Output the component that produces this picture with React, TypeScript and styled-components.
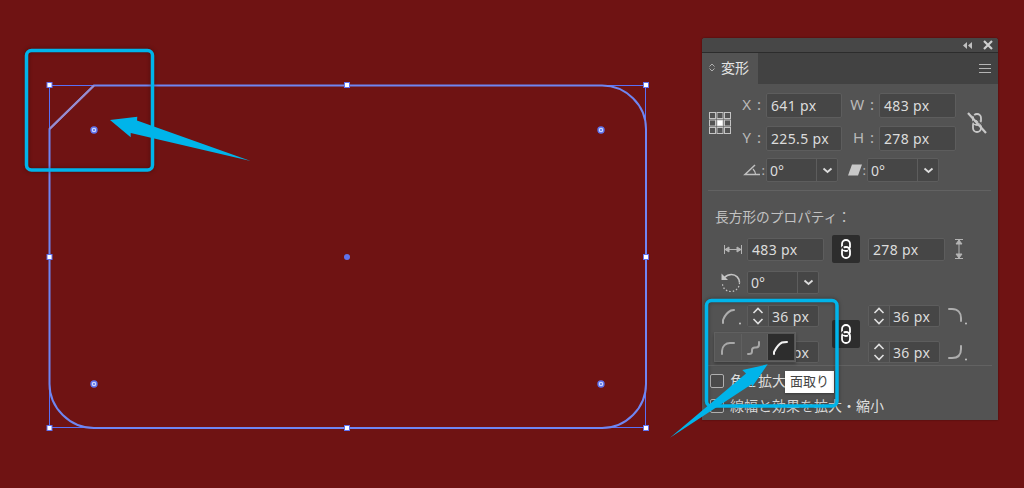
import React from 'react'
import styled, { createGlobalStyle } from 'styled-components'

const GlobalStyle = createGlobalStyle`
  html, body {
    margin: 0;
    padding: 0;
    background: #6f1313;
  }
`

const Page = styled.div`
  position: relative;
  display: flex;
  align-items: flex-start;
  width: 1024px;
  height: 488px;
  overflow: hidden;
  background: #6f1313;
  font-family: "Noto Sans", "Noto Sans CJK JP", sans-serif;
`

const Artboard = styled.svg`
  display: block;
  flex: 0 0 702px;
  width: 702px;
  height: 488px;
`

const Annotations = styled.svg`
  position: absolute;
  left: 0;
  top: 0;
  width: 1024px;
  height: 488px;
  pointer-events: none;
`

const Panel = styled.section`
  position: relative;
  flex: 0 0 296px;
  width: 296px;
  height: 382px;
  margin-top: 38px;
  background: #535353;
  border-radius: 3px 3px 0 0;
  box-shadow: 0 0 2px rgba(0, 0, 0, 0.45);
  color: #d9d9d9;
`

const TitleBar = styled.div`
  display: flex;
  align-items: center;
  justify-content: flex-end;
  gap: 11px;
  height: 14px;
  padding: 0 5px;
  background: #474747;
  border-bottom: 1px solid #2c2c2c;
  border-radius: 3px 3px 0 0;
`

const TabBar = styled.div`
  display: flex;
  align-items: stretch;
  justify-content: space-between;
  height: 31px;
  padding-right: 7px;
  background: #424242;
`

const Tab = styled.div`
  display: flex;
  align-items: center;
  gap: 6px;
  width: 56px;
  padding: 0 0 3px 7px;
  box-sizing: border-box;
  background: #535353;
  font-size: 14px;
  color: #e4e4e4;
`

const MenuLines = styled.div`
  align-self: center;
  width: 12px;
  height: 9px;
  border-top: 1px solid #b4b4b4;
  border-bottom: 1px solid #b4b4b4;
  box-sizing: border-box;
  background: linear-gradient(#b4b4b4, #b4b4b4) center / 100% 1px no-repeat;
`

const PositionGrid = styled.div`
  display: grid;
  grid-template-columns: 39px 25px 76px 37px 77px 1fr;
  grid-template-rows: 25px 25px;
  row-gap: 8px;
  padding-top: 9px;
`

const GridIcon = styled.div<{ $column: number }>`
  grid-column: ${({ $column }) => $column};
  grid-row: 1 / 3;
  display: flex;
  align-items: center;
  justify-content: ${({ $column }) => ($column === 1 ? 'flex-end' : 'center')};
  padding-right: ${({ $column }) => ($column === 1 ? '10px' : '0')};
  padding-top: 2px;
`

const AxisLabel = styled.label<{ $column?: number }>`
  grid-column: ${({ $column }) => $column ?? 'auto'};
  display: flex;
  align-items: center;
  justify-content: flex-end;
  padding-right: 5px;
  padding-bottom: 4px;
  font-size: 15px;
  word-spacing: 2px;
  color: #b9b9b9;
  white-space: pre;
`

const Field = styled.div<{ $width?: number }>`
  display: flex;
  align-items: center;
  box-sizing: border-box;
  width: ${({ $width }) => ($width ? `${$width}px` : '100%')};
  height: 100%;
  padding-left: 4px;
  background: #464646;
  border: 1px solid #5d5d5d;
  border-radius: 2px;
  font-size: 14px;
  letter-spacing: 0.35px;
  color: #dcdcdc;
  white-space: nowrap;
  overflow: hidden;
`

const AngleRow = styled.div`
  display: flex;
  align-items: center;
  height: 24px;
  margin: 7px 0 8px;
  padding-left: 40px;
`

const AngleLabel = styled.div<{ $width: number }>`
  display: flex;
  align-items: center;
  justify-content: flex-end;
  width: ${({ $width }) => $width}px;
  gap: 1px;
  padding-right: 1px;
  box-sizing: border-box;
  font-size: 13px;
  color: #b9b9b9;
`

const ComboBox = styled.div<{ $width: number }>`
  display: flex;
  flex: 0 0 auto;
  box-sizing: border-box;
  width: ${({ $width }) => $width}px;
  height: 24px;
  background: #464646;
  border: 1px solid #5d5d5d;
  border-radius: 2px;
  font-size: 14px;
  color: #dcdcdc;
`

const ComboValue = styled.div`
  flex: 1;
  display: flex;
  align-items: center;
  padding-left: 3px;
`

const ComboArrow = styled.div`
  flex: 0 0 20px;
  display: flex;
  align-items: center;
  justify-content: center;
  border-left: 1px solid #5d5d5d;
`

const Divider = styled.hr`
  height: 1px;
  margin: 0 7px 0 6px;
  border: 0;
  background: #626262;
`

const SectionTitle = styled.h3`
  margin: 16px 0 0 13px;
  font-size: 13.7px;
  line-height: 20px;
  font-weight: 400;
  color: #c2c2c2;
`

const SizeRow = styled.div`
  display: flex;
  align-items: center;
  height: 28px;
  margin-top: 8px;
`

const RowIcon = styled.div<{ $trailing?: boolean }>`
  display: flex;
  align-items: center;
  justify-content: flex-end;
  flex: 0 0 ${({ $trailing }) => ($trailing ? '24px' : '45px')};
  padding-right: 5px;
  box-sizing: border-box;
`

const SizeField = styled(Field)`
  flex: 0 0 auto;
  height: 23px;
`

const ChainButton = styled.div`
  display: flex;
  align-items: center;
  justify-content: center;
  flex: 0 0 28px;
  height: 28px;
  margin: 0 8px;
  background: #2d2d2d;
  border-radius: 2px;
`

const RotateRow = styled.div`
  display: flex;
  align-items: center;
  height: 23px;
  margin-top: 8px;

  ${ComboBox} {
    height: 23px;
  }
`

const CornerGrid = styled.div`
  display: grid;
  grid-template-columns: 45px 72px 13px 28px 8px 72px 1fr;
  grid-template-rows: 22px 22px;
  row-gap: 14px;
  height: 58px;
  margin-top: 11px;
  overflow: hidden;
`

const Stepper = styled.div<{ $column: number }>`
  grid-column: ${({ $column }) => $column};
  display: flex;
  box-sizing: border-box;
  height: 22px;
  background: #464646;
  border: 1px solid #5d5d5d;
  border-radius: 2px;
  font-size: 14px;
  letter-spacing: 0.35px;
  color: #dcdcdc;
  white-space: nowrap;
`

const StepperArrows = styled.div`
  flex: 0 0 20px;
  display: flex;
  align-items: center;
  justify-content: center;
  background: #4e4e4e;
  border-right: 1px solid #5d5d5d;
`

const StepperValue = styled.div`
  display: flex;
  align-items: center;
  padding-left: 3px;
`

const CornerIcon = styled.div<{ $side: 'left' | 'right' }>`
  display: flex;
  align-items: center;
  justify-content: ${({ $side }) => ($side === 'left' ? 'flex-end' : 'flex-start')};
  padding: ${({ $side }) => ($side === 'left' ? '0 4px 0 0' : '0 0 0 6px')};
`

const CornerChain = styled.div`
  grid-column: 4;
  grid-row: 1 / 3;
  align-self: center;
  display: flex;
  align-items: center;
  justify-content: center;
  height: 28px;
  background: #2d2d2d;
  border-radius: 2px;
`

const SectionDivider = styled(Divider)`
  margin: 2px 6px 0 6px;
`

const OptionRow = styled.div<{ $top: number }>`
  display: flex;
  align-items: center;
  gap: 6px;
  height: 18px;
  margin-top: ${({ $top }) => $top}px;
  padding-left: 8px;
  font-size: 14px;
  color: #dedede;
`

const OptionText = styled.span`
  margin-bottom: 3px;
`

const CheckBox = styled.span`
  display: block;
  box-sizing: border-box;
  width: 14px;
  height: 14px;
  border: 1px solid #b0b0b0;
  border-radius: 2px;
  background: #4a4a4a;
`

const ShapePopup = styled.div`
  position: absolute;
  left: 12px;
  top: 294px;
  display: flex;
  box-sizing: border-box;
  width: 82px;
  height: 30px;
  padding: 1px;
  background: #565656;
  border: 1px solid #606060;
  box-shadow: 0 2px 3px rgba(0, 0, 0, 0.3);
`

const ShapeOption = styled.div<{ $active?: boolean }>`
  flex: 1;
  display: flex;
  align-items: center;
  justify-content: center;
  background: ${({ $active }) => ($active ? '#2d2d2d' : 'transparent')};
  border-right: 1px solid ${({ $active }) => ($active ? '#2d2d2d' : '#606060')};
`

const Tooltip = styled.div`
  position: absolute;
  left: 83px;
  top: 333px;
  box-sizing: border-box;
  width: 49px;
  height: 22px;
  padding-bottom: 3px;
  display: flex;
  align-items: center;
  justify-content: center;
  background: #ffffff;
  box-shadow: 0 1px 2px rgba(0, 0, 0, 0.3);
  font-size: 13px;
  color: #444444;
`

const handles: [number, number][] = [
  [49.5, 85],
  [347, 85],
  [646, 85],
  [49.5, 257],
  [646, 257],
  [49.5, 428],
  [347, 428],
  [646, 428],
]

const widgets: [number, number][] = [
  [94, 130],
  [601, 130],
  [94, 384],
  [601, 384],
]

const ReferencePoint = () => (
  <svg width="22" height="22" viewBox="0 0 22 22" fill="none" stroke="#c4c4c4" strokeWidth="1">
    {[0.5, 8, 15.5].flatMap(y =>
      [0.5, 8, 15.5].map(x => (
        <rect
          key={`${x}-${y}`}
          x={x}
          y={y}
          width="6"
          height="6"
          fill={x === 8 && y === 8 ? '#ffffff' : 'none'}
        />
      )),
    )}
  </svg>
)

// two links; the short strokes in the button colour make them look interlocked
const ChainIcon = ({ broken }: { broken?: boolean }) => {
  const back = broken ? '#535353' : '#2d2d2d'
  return (
    <svg width="20" height="22" viewBox="0 0 20 22" fill="none" stroke={broken ? '#c8c8c8' : '#ffffff'} strokeWidth="1.800">
      <rect x="6" y="2" width="8" height="11" rx="4" />
      <path d="M4.500 11.500 7.500 9" stroke={back} strokeWidth="2" />
      <path d="M12.500 13 15.500 10.500" stroke={back} strokeWidth="2" />
      <rect x="6" y="9" width="8" height="11" rx="4" />
      <path d="M6 8.500 8 11.500" stroke={back} strokeWidth="1.500" />
      {broken && <path d="M1 1 19 21" strokeWidth="2.200" />}
      {broken && <path d="M3.500 0 20 18.500" stroke={back} strokeWidth="1.400" />}
    </svg>
  )
}

const Chevron = () => (
  <svg width="11" height="7" viewBox="0 0 11 7" fill="none" stroke="#dddddd" strokeWidth="1.800">
    <path d="M1.500 1.500 5.500 5 9.500 1.500" />
  </svg>
)

const StepArrows = () => (
  <svg width="12" height="20" viewBox="0 0 12 20" fill="none" stroke="#e0e0e0" strokeWidth="1.600">
    <path d="M1.500 7 6 2.500 10.500 7M1.500 13 6 17.500 10.500 13" />
  </svg>
)

const AngleIcon = () => (
  <svg width="18" height="12" viewBox="0 0 18 12" fill="none" stroke="#c0c0c0" strokeWidth="1.500">
    <path d="M12 1 2 10.500h15" />
    <path d="M10 5c1.400 1.500 2.500 3 2.500 5" strokeWidth="1.200" />
  </svg>
)

const ShearIcon = () => (
  <svg width="14" height="12" viewBox="0 0 14 12" fill="#c8c8c8">
    <path d="M4 .5h10L10 11.500H0z" />
  </svg>
)

const WidthIcon = () => (
  <svg width="18" height="9" viewBox="0 0 18 9" fill="none" stroke="#b4b4b4" strokeWidth="1">
    <path d="M.5 0v9M17.500 0v9M1 4.500h16" />
    <path d="M1 4.500 5 2v5zM17 4.500 13 2v5z" fill="#b4b4b4" />
  </svg>
)

const HeightIcon = () => (
  <svg width="10" height="20" viewBox="0 0 10 20" fill="none" stroke="#b4b4b4" strokeWidth="1">
    <path d="M1 .5h8M1 19.500h8M5 1v18" />
    <path d="M5 1 2 5h6zM5 19 2 15h6z" fill="#b4b4b4" />
  </svg>
)

const RotateIcon = () => (
  <svg width="22" height="22" viewBox="0 0 22 22" fill="none" stroke="#c4c4c4" strokeWidth="1.600">
    <path d="M4.500 5.500C6.500 3.500 9 2.500 11.500 2.500c4.500 0 8 3.500 8 8" />
    <path d="M1.500 1.500v6.500h6.500z" fill="#c4c4c4" stroke="none" />
    <path d="M19.500 10.500c0 5-3.500 9-8.500 9s-8-3-8.500-7.500" strokeWidth="1.200" strokeDasharray="1.500 2" />
  </svg>
)

type CornerKind = 'round' | 'inverted' | 'chamfer'

const cornerPaths: Record<CornerKind, string> = {
  round: 'M3 16v-3c0-5 4-8 8-8h4',
  inverted: 'M3 16h1c2 0 3-1 3-2.500V12c0-1.500 1-2.500 3-2.500h1c2 0 3-1 3-3V4',
  chamfer: 'M3 16v-2c1.500-3 5-8 8-9.500 1-.5 2-.5 5-.5',
}

const CornerShape = ({ kind, color }: { kind: CornerKind; color: string }) => (
  <svg width="19" height="19" viewBox="0 0 19 19" fill="none" stroke={color} strokeWidth="2" strokeLinecap="round">
    <path d={cornerPaths[kind]} />
  </svg>
)

const cornerGlyphs = {
  tl: 'M3 17v-3c1.500-4 5-8 8-9.500 1-.5 2-.5 3-.5',
  tr: 'M3 3h3c6 0 9 4 9 9v3',
  br: 'M3 16h3c6 0 9-3 9-9V4',
}

const CornerGlyph = ({ corner }: { corner: keyof typeof cornerGlyphs }) => (
  <svg width="23" height="20" viewBox="0 0 23 20" fill="none" stroke="#aeaeae" strokeWidth="2" strokeLinecap="round">
    <path d={cornerGlyphs[corner]} />
    <circle cx="20" cy="17.500" r="0.900" fill="#d0d0d0" stroke="none" />
  </svg>
)

const CornerField = ({ column }: { column: number }) => (
  <Stepper $column={column}>
    <StepperArrows>
      <StepArrows />
    </StepperArrows>
    <StepperValue>36 px</StepperValue>
  </Stepper>
)

const AngleCombo = () => (
  <ComboBox $width={72}>
    <ComboValue>0°</ComboValue>
    <ComboArrow>
      <Chevron />
    </ComboArrow>
  </ComboBox>
)

const App: React.FC = () => (
  <Page>
    <GlobalStyle />
    <Artboard viewBox="0 0 702 488">
      <rect x="49.500" y="85.500" width="596" height="342" fill="none" stroke="#5a70f5" strokeWidth="1" />
      <path
        d="M49.500 129 94 85.500H602C626 85.500 646 105 646 129V384C646 408 626 428 602 428H94C70 428 49.500 408 49.500 384Z"
        fill="none"
        stroke="#6f86f2"
        strokeWidth="2"
      />
      <path d="M49.500 129 94 85.500" fill="none" stroke="#9a8ccc" strokeWidth="2" />
      {handles.map(([x, y]) => (
        <rect key={`${x}-${y}`} x={x - 2.500} y={y - 2.500} width="5" height="5" fill="#ffffff" stroke="#6173f0" strokeWidth="1" />
      ))}
      {widgets.map(([x, y]) => (
        <g key={`${x}-${y}`}>
          <circle cx={x} cy={y} r="3" fill="#ccd6ff" stroke="#5f73ee" strokeWidth="1.400" />
          <circle cx={x} cy={y} r="0.900" fill="#4a5fe0" />
        </g>
      ))}
      <circle cx="347" cy="257" r="3" fill="#5f73ee" />
    </Artboard>

    <Panel>
      <TitleBar>
        <svg width="9" height="7" viewBox="0 0 9 7" fill="#c0c0c0">
          <path d="M4 0v7L0 3.500zM9 0v7L5 3.500z" />
        </svg>
        <svg width="10" height="10" viewBox="0 0 10 10" stroke="#cfcfcf" strokeWidth="2.200">
          <path d="M1 1l8 8M9 1l-8 8" />
        </svg>
      </TitleBar>
      <TabBar>
        <Tab>
          <svg width="6" height="9" viewBox="0 0 6 9" fill="none" stroke="#b0b0b0" strokeWidth="1">
            <path d="M.5 3.500 3 1l2.500 2.500M.5 5.500 3 8l2.500-2.500" />
          </svg>
          変形
        </Tab>
        <MenuLines />
      </TabBar>

      <PositionGrid>
        <GridIcon $column={1}>
          <ReferencePoint />
        </GridIcon>
        <AxisLabel $column={2}>X :</AxisLabel>
        <Field>641 px</Field>
        <AxisLabel>W :</AxisLabel>
        <Field>483 px</Field>
        <GridIcon $column={6}>
          <ChainIcon broken />
        </GridIcon>
        <AxisLabel $column={2}>Y :</AxisLabel>
        <Field>225.5 px</Field>
        <AxisLabel>H :</AxisLabel>
        <Field>278 px</Field>
      </PositionGrid>

      <AngleRow>
        <AngleLabel $width={24}>
          <AngleIcon />:
        </AngleLabel>
        <AngleCombo />
        <AngleLabel $width={29}>
          <ShearIcon />:
        </AngleLabel>
        <AngleCombo />
      </AngleRow>

      <Divider />
      <SectionTitle>長方形のプロパティ：</SectionTitle>

      <SizeRow>
        <RowIcon>
          <WidthIcon />
        </RowIcon>
        <SizeField $width={77}>483 px</SizeField>
        <ChainButton>
          <ChainIcon />
        </ChainButton>
        <SizeField $width={77}>278 px</SizeField>
        <RowIcon $trailing>
          <HeightIcon />
        </RowIcon>
      </SizeRow>

      <RotateRow>
        <RowIcon>
          <RotateIcon />
        </RowIcon>
        <AngleCombo />
      </RotateRow>

      <CornerGrid>
        <CornerIcon $side="left">
          <CornerGlyph corner="tl" />
        </CornerIcon>
        <CornerField column={2} />
        <CornerChain>
          <ChainIcon />
        </CornerChain>
        <CornerField column={6} />
        <CornerIcon $side="right">
          <CornerGlyph corner="tr" />
        </CornerIcon>
        <CornerField column={2} />
        <CornerField column={6} />
        <CornerIcon $side="right">
          <CornerGlyph corner="br" />
        </CornerIcon>
      </CornerGrid>

      <SectionDivider />
      <OptionRow $top={6}>
        <CheckBox />
        <OptionText>角を拡大・縮小</OptionText>
      </OptionRow>
      <OptionRow $top={7}>
        <CheckBox />
        <OptionText>線幅と効果を拡大・縮小</OptionText>
      </OptionRow>

      <ShapePopup>
        <ShapeOption>
          <CornerShape kind="round" color="#a8a8a8" />
        </ShapeOption>
        <ShapeOption>
          <CornerShape kind="inverted" color="#a8a8a8" />
        </ShapeOption>
        <ShapeOption $active>
          <CornerShape kind="chamfer" color="#f2f2f2" />
        </ShapeOption>
      </ShapePopup>
      <Tooltip>面取り</Tooltip>
    </Panel>

    <Annotations viewBox="0 0 1024 488">
      <g style={{ filter: 'drop-shadow(0 0 2px rgba(0,0,0,0.35))' }}>
        <rect x="26.500" y="50.500" width="126" height="119.500" rx="5" fill="none" stroke="#00b4ea" strokeWidth="3.500" />
        <rect x="706.500" y="300.500" width="130.500" height="105.500" rx="5" fill="none" stroke="#00b4ea" strokeWidth="3.500" />
      </g>
      <path d="M110 120 137.300 116.700 137 120.500 250.700 161 130.700 133 130.700 137.300z" fill="#00b4ea" />
      <path d="M670 437.700 746 373.500 742.300 370 767.700 364.300 752 387 752 384z" fill="#00b4ea" />
    </Annotations>
  </Page>
)

export default App
